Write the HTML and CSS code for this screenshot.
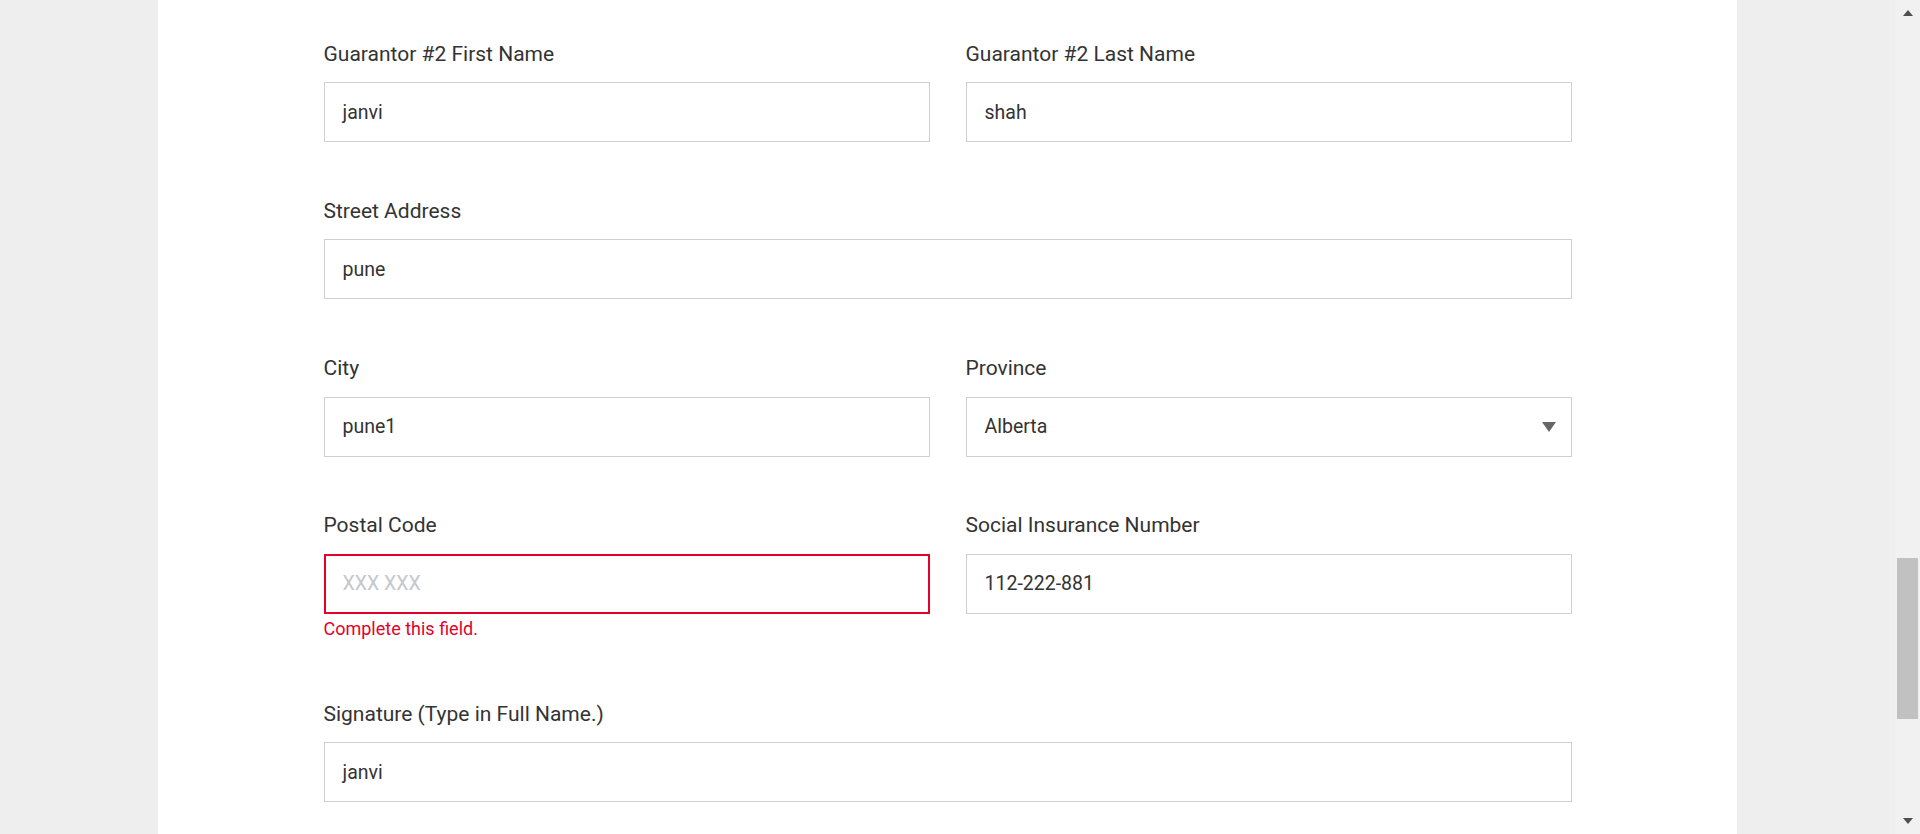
FILE: index.html
```html
<!DOCTYPE html>
<html lang="en">
<head>
<meta charset="utf-8">
<title>Guarantor Form</title>
<link rel="stylesheet" href="styles.css">
</head>
<body>
<div class="page">
  <div class="viewport">
    <div class="card">
      <form class="form">
        <div class="row two">
          <div class="field">
            <label class="label">Guarantor #2 First Name</label>
            <div class="input">janvi</div>
          </div>
          <div class="field">
            <label class="label">Guarantor #2 Last Name</label>
            <div class="input">shah</div>
          </div>
        </div>
        <div class="row">
          <div class="field">
            <label class="label">Street Address</label>
            <div class="input">pune</div>
          </div>
        </div>
        <div class="row two">
          <div class="field">
            <label class="label">City</label>
            <div class="input">pune1</div>
          </div>
          <div class="field">
            <label class="label">Province</label>
            <div class="input select"><span>Alberta</span><span class="caret"></span></div>
          </div>
        </div>
        <div class="row two">
          <div class="field">
            <label class="label">Postal Code</label>
            <div class="input invalid"><span class="placeholder">XXX XXX</span></div>
            <div class="error">Complete this field.</div>
          </div>
          <div class="field">
            <label class="label">Social Insurance Number</label>
            <div class="input">112-222-881</div>
          </div>
        </div>
        <div class="row">
          <div class="field">
            <label class="label">Signature (Type in Full Name.)</label>
            <div class="input">janvi</div>
          </div>
        </div>
      </form>
    </div>
  </div>
  <div class="scrollbar">
    <div class="sb-btn"><span class="sb-up"></span></div>
    <div class="sb-track"><div class="sb-thumb"></div></div>
    <div class="sb-btn"><span class="sb-down"></span></div>
  </div>
</div>
</body>
</html>
```

FILE: styles.css
```css
* { box-sizing: border-box; }
html, body { margin: 0; padding: 0; height: 100%; overflow: hidden; }
body { font-family: Roboto, "Liberation Sans", Arial, sans-serif; color: #333; }

.page { display: flex; height: 834px; }
.viewport { flex: 1; background: #eeeeee; overflow: hidden; }
.card { width: 1579px; height: 100%; margin: 0 auto; background: #fff; padding-top: 40.5px; }
.form { width: 1248px; margin: 0 auto; }

.row { display: flex; gap: 36px; margin-bottom: 55.75px; }
.row .field { flex: 1; min-width: 0; }

.label { display: block; font-size: 21px; line-height: 26px; margin-bottom: 15.5px; color: #333; }
.input {
  height: 60px; border: 1px solid #d0d0d0; background: #fff;
  display: flex; align-items: center; padding: 0 18px;
  font-size: 19.5px; color: #333;
}
.input.invalid { border: 2px solid #e4002b; padding: 0 17px; }
.placeholder { color: #c4c8cc; }
.select { justify-content: space-between; padding-right: 15px; }
.caret { width: 0; height: 0; border-left: 7.5px solid transparent; border-right: 7.5px solid transparent; border-top: 10px solid #666; }
.error { color: #e4002b; font-size: 18px; line-height: 22px; margin-top: 4.5px; margin-bottom: 4.5px; }

.scrollbar { width: 25px; background: #f1f1f1; display: flex; flex-direction: column; }
.sb-btn { height: 26px; display: flex; justify-content: center; align-items: center; }
.sb-up { width: 0; height: 0; border-left: 5.5px solid transparent; border-right: 5.5px solid transparent; border-bottom: 6px solid #505050; }
.sb-down { width: 0; height: 0; border-left: 5.5px solid transparent; border-right: 5.5px solid transparent; border-top: 6px solid #505050; }
.sb-track { flex: 1; padding: 0 2px; }
.sb-thumb { margin-top: 532px; height: 161px; background: #c1c1c1; }
```
